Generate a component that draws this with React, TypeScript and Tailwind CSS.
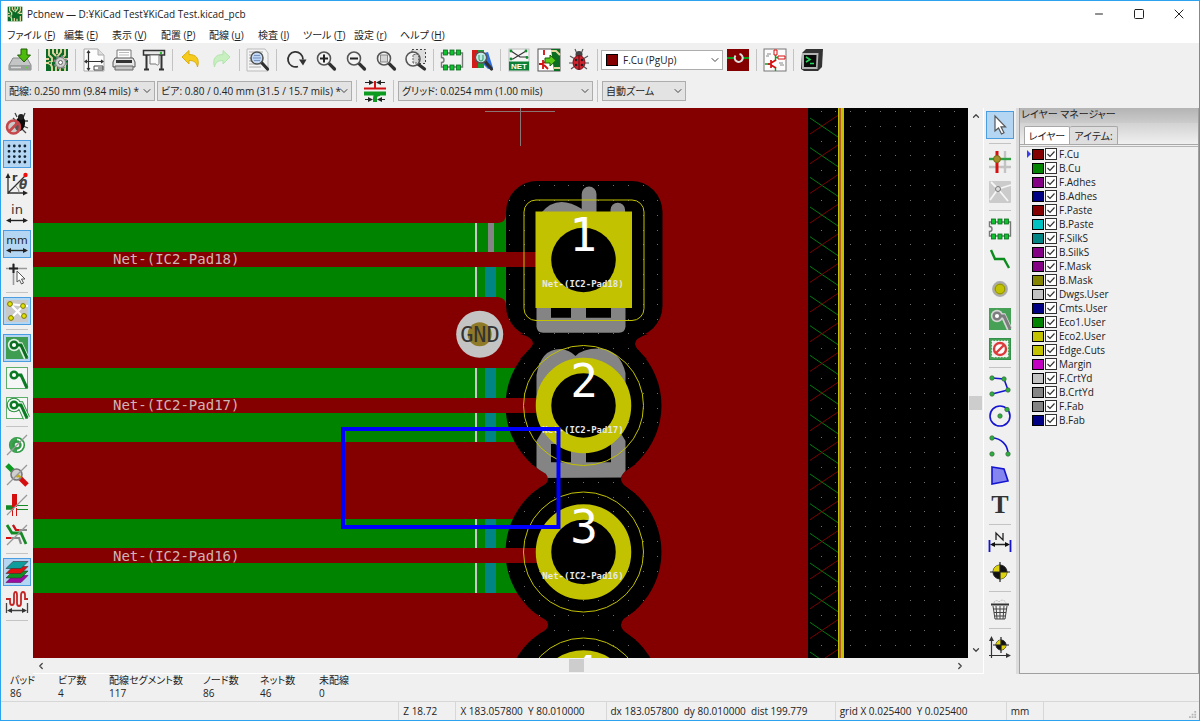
import type { ReactNode } from 'react';
import { ChevronDown, ChevronLeft, ChevronRight, ChevronUp, Minus, Square, X } from 'lucide-react';
import clsx from 'clsx';

type Tool = { label: string; icon: ReactNode; active?: boolean } | 'sep';

const GREEN = '#148a25';
const RED = '#d40f0f';

const menus = [
  { text: 'ファイル', key: 'F' },
  { text: '編集', key: 'E' },
  { text: '表示', key: 'V' },
  { text: '配置', key: 'P' },
  { text: '配線', key: 'u' },
  { text: '検査', key: 'I' },
  { text: 'ツール', key: 'T' },
  { text: '設定', key: 'r' },
  { text: 'ヘルプ', key: 'H' },
];

const layers = [
  { name: 'F.Cu', color: '#840000' },
  { name: 'B.Cu', color: '#008400' },
  { name: 'F.Adhes', color: '#840084' },
  { name: 'B.Adhes', color: '#000084' },
  { name: 'F.Paste', color: '#840000' },
  { name: 'B.Paste', color: '#00c2c2' },
  { name: 'F.SilkS', color: '#008484' },
  { name: 'B.SilkS', color: '#840084' },
  { name: 'F.Mask', color: '#840084' },
  { name: 'B.Mask', color: '#848400' },
  { name: 'Dwgs.User', color: '#c2c2c2' },
  { name: 'Cmts.User', color: '#000084' },
  { name: 'Eco1.User', color: '#008400' },
  { name: 'Eco2.User', color: '#c2c200' },
  { name: 'Edge.Cuts', color: '#c2c200' },
  { name: 'Margin', color: '#c200c2' },
  { name: 'F.CrtYd', color: '#c2c2c2' },
  { name: 'B.CrtYd', color: '#848484' },
  { name: 'F.Fab', color: '#848484' },
  { name: 'B.Fab', color: '#000084' },
];

const stats = [
  { label: 'パッド', value: '86' },
  { label: 'ビア数', value: '4' },
  { label: '配線セグメント数', value: '117' },
  { label: 'ノード数', value: '86' },
  { label: 'ネット数', value: '46' },
  { label: '未配線', value: '0' },
];

const statusCells = [
  '',
  'Z 18.72',
  'X 183.057800  Y 80.010000',
  'dx 183.057800  dy 80.010000  dist 199.779',
  'grid X 0.025400  Y 0.025400',
  'mm',
];

function Icon({ children }: { children: ReactNode }) {
  return (
    <svg viewBox="0 0 24 24" className="size-6 shrink-0 overflow-visible" fill="none" aria-hidden="true">
      {children}
    </svg>
  );
}

function BoardArt() {
  return (
    <>
      <rect x="1" y="1" width="22" height="22" fill="#0b6b26" />
      <path
        d="M4 1v6l3 3v4M8 1v4l3 3M12 1v5M16 1v3l-4 5M20 1v6l-4 4M23 11h-5M1 11h3M1 15h4l2 4v4M11 23v-5M15 23v-4M20 15v8"
        stroke="#e3d7a0"
        strokeWidth="1.9"
      />
      <circle cx="5" cy="15" r="2" fill="#e3d7a0" />
      <circle cx="5" cy="15" r="1" fill="#0b6b26" />
    </>
  );
}

function Lens({ children, x = 10, y = 10, r = 6.5 }: { children?: ReactNode; x?: number; y?: number; r?: number }) {
  return (
    <>
      <path d={`M${x + r * 0.75} ${y + r * 0.75}L21.500 21`} stroke="#303030" strokeWidth="3.200" strokeLinecap="round" />
      <circle cx={x} cy={y} r={r} fill="#f4f4f4" stroke="#555" strokeWidth="1.6" />
      {children}
    </>
  );
}

function Chip() {
  return (
    <>
      <path d="M1.500 5h21v14h-21v-4.500a2.500 2.500 0 0 0 0-5z" fill="#f3f3f3" stroke="#777" strokeWidth="1.4" />
      {[3.5, 10, 16.5].map((x) => (
        <g key={x} fill="#0fc02f" stroke="#0a6d1c" strokeWidth="0.8">
          <rect x={x} y="2" width="4" height="5" />
          <rect x={x} y="17" width="4" height="5" />
        </g>
      ))}
    </>
  );
}

function TrackArt({ color, halo }: { color: string; halo?: string }) {
  return (
    <>
      {halo && (
        <>
          <path d="M9 9h6.500l6 13" stroke={halo} strokeWidth="5.500" />
          <circle cx="9" cy="9" r="6.200" fill={halo} />
        </>
      )}
      <path d="M12 9h4l6 13" stroke={color} strokeWidth="3" />
      <circle cx="9" cy="9" r="3.300" fill="#fff" stroke={color} strokeWidth="2.500" />
    </>
  );
}

function Origin({ x, y, r }: { x: number; y: number; r: number }) {
  return (
    <>
      <circle cx={x} cy={y} r={r} fill="#111" stroke="#222" />
      <path
        d={`M${x} ${y}V${y - r}A${r} ${r} 0 0 0 ${x - r} ${y}ZM${x} ${y}V${y + r}A${r} ${r} 0 0 0 ${x + r} ${y}Z`}
        fill="#ded20c"
      />
      <path d={`M${x} ${y - r - 3}V${y + r + 3}M${x - r - 3} ${y}H${x + r + 3}`} stroke="#222" strokeWidth="1.200" />
    </>
  );
}

function Dots({ points }: { points: number[][] }) {
  return (
    <>
      {points.map(([x, y]) => (
        <circle key={`${x}-${y}`} cx={x} cy={y} r="2.200" fill="#29b13b" stroke="#3f6d46" strokeWidth="0.800" />
      ))}
    </>
  );
}

const mainTools: Tool[] = [
  {
    label: '保存',
    icon: (
      <>
        <path d="M5 10h14l4 7v5H1v-5z" fill="#c3c6c4" stroke="#868a88" />
        <path d="M1 17h22v5H1z" fill="#9a9e9c" />
        <path d="M3 19.500h10" stroke="#d8dad9" strokeWidth="1.500" />
        <circle cx="19" cy="19.500" r="1" fill="#53e02c" />
        <path d="M13 1h6v6h3.500L16 14 9.500 7H13z" fill="#4dbb0c" stroke="#1f5f05" />
      </>
    ),
  },
  'sep',
  {
    label: '基板の設定',
    icon: (
      <>
        <BoardArt />
        <circle cx="15.500" cy="14.500" r="5.500" fill="#d4d4d4" stroke="#888" strokeWidth="3" strokeDasharray="2.200 2.100" />
        <circle cx="15.500" cy="14.500" r="5" fill="#cfcfcf" stroke="#888" />
        <circle cx="15.500" cy="14.500" r="2" fill="#fff" stroke="#666" />
      </>
    ),
  },
  'sep',
  {
    label: 'ページ設定',
    icon: (
      <>
        <path d="M2 1h14l6 6v16H2z" fill="#fdfdfd" stroke="#aaa" />
        <path d="M16 1v6h6" stroke="#aaa" fill="#ddd" />
        <path
          d="M6.500 3v19M3 13.500h18M5 5l1.500-2L8 5M5 20l1.500 2L8 20M5 12l-2 1.500L5 15M19 12l2 1.500L19 15"
          stroke="#333"
          strokeWidth="1.200"
        />
        <path d="M12 18h9v4h-9zM16 20h5" stroke="#444" />
      </>
    ),
  },
  {
    label: '印刷',
    icon: (
      <>
        <path d="M5 2h14v9H5z" fill="#fff" stroke="#777" />
        <path d="M7 4.500h10M7 7h10" stroke="#bbb" />
        <path d="M3 10h18l2 4v5H1v-5z" fill="#e6e6e6" stroke="#555" />
        <path d="M4 12h16v3H4z" fill="#333" />
        <path d="M3 18h18v4H3z" fill="#c5c5c5" stroke="#666" />
      </>
    ),
  },
  {
    label: 'プロット',
    icon: (
      <>
        <path d="M1.500 2.500h21v4.500h-21z" fill="#e7e7e7" stroke="#333" strokeWidth="1.500" />
        <path d="M4.500 7v14M19.500 7v14M2 21.500h5M17 21.500h5" stroke="#333" strokeWidth="2" />
        <path d="M8 7h9v8c0 2-2 3-3 1H8z" fill="#fafafa" stroke="#777" />
        <circle cx="19" cy="5" r="1.200" fill="#27b82c" />
      </>
    ),
  },
  'sep',
  {
    label: '元に戻す',
    icon: <path d="M3 9l7-6.500V6.500c7 0 11 4 8.500 12.500-1-4.500-3-6.500-8.500-6.500V16z" fill="#f6cb1c" stroke="#d9ad10" />,
  },
  {
    label: 'やり直し',
    icon: <path d="M21 9l-7-6.500V6.500C7 6.500 3 10.500 5.500 19c1-4.500 3-6.500 8.500-6.500V16z" fill="#c8efc0" stroke="#b2e4ac" />,
  },
  'sep',
  {
    label: '検索',
    icon: (
      <>
        <path d="M1 1h18l3 4v18H1z" fill="#f4f4f4" stroke="#bbb" />
        <path d="M3 4h14M3 7h14M3 10h14M3 13h14M3 16h12M3 19h12" stroke="#999" strokeWidth="0.800" />
        <Lens x={11} y={10} r={6}>
          <circle cx="11" cy="10" r="5" fill="#bcd5f5" />
          <path d="M7 10h8M8 7.500h6M8 12.500h6" stroke="#7893bd" />
        </Lens>
      </>
    ),
  },
  'sep',
  {
    label: '再描画',
    icon: (
      <>
        <path d="M15 18.500a7.500 7.500 0 1 1 5-7" stroke="#333" strokeWidth="1.800" />
        <path d="M16 11.500h7.500l-3.500 6z" fill="#333" />
      </>
    ),
  },
  {
    label: '拡大',
    icon: (
      <Lens x={11} y={10.5}>
        <path d="M7 10.500h8M11 6.500v8" stroke="#222" strokeWidth="2" />
      </Lens>
    ),
  },
  {
    label: '縮小',
    icon: (
      <Lens x={11} y={10.5}>
        <path d="M7 10.500h8" stroke="#222" strokeWidth="2" />
      </Lens>
    ),
  },
  {
    label: '画面にフィット',
    icon: (
      <Lens x={11} y={10.5}>
        <rect x="7.500" y="7" width="7" height="7" fill="#d5d5d5" stroke="#888" />
      </Lens>
    ),
  },
  {
    label: '選択範囲を拡大',
    icon: (
      <>
        <rect x="9" y="1.500" width="13.500" height="14" fill="#ddd" stroke="#444" strokeDasharray="2 2" />
        <Lens x={10} y={11} r={7}>
          <path d="M10 15V6.500h5.500V15z" fill="#d5d5d5" stroke="#666" strokeDasharray="2 1" />
        </Lens>
      </>
    ),
  },
  'sep',
  { label: 'フットプリントエディター', icon: <Chip /> },
  {
    label: 'フットプリントビューアー',
    icon: (
      <>
        <path d="M2 2h6v18H2z" fill="#d21c1c" />
        <path d="M8 2h6v18H8z" fill="#1c9c38" />
        <path d="M14 5l4-1 5 16-5 1-4-4z" fill="#2f70de" />
        <Lens x={11} y={9.5} r={5.5}>
          <circle cx="11" cy="9.500" r="4.600" fill="#c0e8e8" />
          <path d="M9 7v4a2 2 0 0 0 4 0V7" stroke="#269a5a" />
        </Lens>
      </>
    ),
  },
  'sep',
  {
    label: 'ネットリスト',
    icon: (
      <>
        <rect x="2" y="1" width="20" height="22" fill="#f5f5f5" stroke="#bbb" />
        <path d="M4 3l9 6h7M4 11h2l13-8" stroke="#333" strokeWidth="1.200" />
        <g fill="#0a8f2c">
          <circle cx="4" cy="3" r="1.400" />
          <circle cx="19" cy="3" r="1.400" />
          <circle cx="4" cy="11" r="1.400" />
          <circle cx="20" cy="9.500" r="1.400" />
        </g>
        <rect x="2" y="13.500" width="20" height="9" fill="#0b8036" />
        <text x="12" y="21" textAnchor="middle" fill="#fff" fontSize="8" fontWeight="700" fontFamily="Liberation Sans, sans-serif">
          NET
        </text>
      </>
    ),
  },
  {
    label: '回路図から基板を更新',
    icon: (
      <>
        <rect x="1" y="1" width="22" height="22" fill="#fff" stroke="#555" />
        <path d="M14 1h9v22h-6z" fill="#0a6e22" />
        <path d="M14 3h5l4 4M17 20h6" stroke="#e2d69b" strokeWidth="2" />
        <path d="M7 2v5M2 16h4M6 12v9M7 15l4-3M7 17l4 4" stroke={RED} strokeWidth="1.800" />
        <path d="M8 10h5V7l6 5.500-6 5.500v-3H8z" fill="#58c91a" stroke="#1d5f07" />
      </>
    ),
  },
  {
    label: 'DRC',
    icon: (
      <>
        <path d="M8 1l2 5M16 1l-2 5M3 8l5 3M21 8l-5 3M2 15h5M22 15h-5M4 21l4-3M20 21l-4-3" stroke="#555" strokeWidth="1.100" />
        <circle cx="12" cy="6.500" r="3.500" fill="#444" />
        <ellipse cx="12" cy="14.500" rx="6" ry="7" fill="#d2232e" stroke="#75111b" />
        <path d="M12 7.500v14" stroke="#4a0a10" />
        <g fill="#222">
          <circle cx="9" cy="12" r="1.300" />
          <circle cx="15" cy="12" r="1.300" />
          <circle cx="9" cy="17" r="1.300" />
          <circle cx="15" cy="17" r="1.300" />
        </g>
      </>
    ),
  },
  'sep',
];

const layerPairTools: Tool[] = [
  {
    label: 'レイヤーペアを選択',
    icon: (
      <>
        <rect x="1" y="1" width="22" height="22" fill="#840000" />
        <path d="M1 10h7M16 10h7" stroke="#0a9a1c" strokeWidth="2" />
        <path d="M9.500 7.500a4 4 0 1 0 4-1.500" stroke="#ddd" strokeWidth="2" />
      </>
    ),
  },
  'sep',
  {
    label: '回路図エディター',
    icon: (
      <>
        <rect x="1" y="1" width="22" height="22" fill="#fcfcfc" stroke="#777" />
        <path d="M11 2h3v5h-3zM15 8h7v3h-7z" fill="#fff" stroke={RED} />
        <path d="M12.500 7v6M12.500 9.500H15M12.500 19v4M2 16h5" stroke="#119b28" strokeWidth="1.400" />
        <path d="M8 12v8M8 15l5-3M8 17l5 3M5 16h3" stroke={RED} strokeWidth="1.700" />
        <path d="M4 6h4M3 8h3M16 15h4M17 17h4" stroke="#888" />
      </>
    ),
  },
  'sep',
  {
    label: 'スクリプトコンソール',
    icon: (
      <>
        <path d="M6 1h17l-1 18-4 4H4l-3-2L2 5z" fill="#333" />
        <path d="M2 5h16.500l-1 16H2z" fill="#b4b4b4" />
        <path d="M4 7h12.500l-0.500 12H4z" fill="#0a0a0a" />
        <path d="M6 9l4 2.500-4 2.500M10 15.500h4" stroke="#22d65a" strokeWidth="1.600" />
      </>
    ),
  },
];

const optionTools: Tool[] = [
  {
    label: 'DRCを無効化',
    icon: (
      <>
        <path d="M10 1l2 4M20 1l-2 5M23 9h-4M23 16l-5-2M21 21l-4-4M8 6l3 3" stroke="#444" strokeWidth="1.300" />
        <ellipse cx="15" cy="12" rx="5" ry="7.500" fill="#0a0a0a" transform="rotate(15 15 12)" />
        <circle cx="16" cy="5" r="3" fill="#222" />
        <circle cx="8.500" cy="15" r="6.500" stroke="#c4474b" strokeWidth="2.600" fill="#a8a0a0" fillOpacity="0.500" />
        <path d="M4 19.500l9-9" stroke="#c4474b" strokeWidth="2.600" />
      </>
    ),
  },
  {
    label: 'グリッドを表示',
    active: true,
    icon: [4, 9.3, 14.6, 20].map((y) => (
      <path key={y} d={`M4 ${y}h17`} stroke="#123" strokeWidth="2.800" strokeLinecap="round" strokeDasharray="0 5.300" />
    )),
  },
  {
    label: '極座標',
    icon: (
      <>
        <path d="M3 22V4M3 21h18M3 21L20 4" stroke="#333" strokeWidth="1.300" />
        <path d="M0.500 6L3 1l2.500 5zM18 18.500l5 2.500-5 2.500z" fill="#222" />
        <path d="M10 14c3 2 4 4 4 7" stroke="#777" />
        <circle cx="20.500" cy="3" r="2.200" fill="#f20d0d" />
        <text x="7" y="9" fill="#333" fontSize="11" fontWeight="700" fontFamily="DejaVu Sans, sans-serif">
          r
        </text>
        <text x="14" y="17" fill="#444" fontSize="12" fontStyle="italic" fontWeight="700" fontFamily="DejaVu Sans, sans-serif">
          θ
        </text>
      </>
    ),
  },
  {
    label: 'インチ',
    icon: (
      <>
        <text x="12" y="12" textAnchor="middle" fill="#333" fontSize="13" fontFamily="DejaVu Sans, sans-serif">
          in
        </text>
        <path d="M3 18.500h18" stroke="#222" strokeWidth="1.400" />
        <path d="M6 16l-5 2.500L6 21zM18 16l5 2.500-5 2.500z" fill="#222" />
      </>
    ),
  },
  {
    label: 'ミリメートル',
    active: true,
    icon: (
      <>
        <text x="12" y="12" textAnchor="middle" fill="#222" fontSize="11" fontFamily="DejaVu Sans, sans-serif">
          mm
        </text>
        <path d="M3 18.500h18" stroke="#222" strokeWidth="1.400" />
        <path d="M6 16l-5 2.500L6 21zM18 16l5 2.500-5 2.500z" fill="#222" />
      </>
    ),
  },
  {
    label: 'カーソル形状',
    icon: (
      <>
        <path d="M8.500 1v22M1 6.500h21" stroke="#999" strokeWidth="1.600" />
        <path d="M8.500 2v9M4 6.500h9" stroke="#222" strokeWidth="2" />
        <path d="M12 9v11l2.500-2 2 4 2-1-2-4h3.500z" fill="#fff" stroke="#555" />
      </>
    ),
  },
  'sep',
  {
    label: 'ラッツネストを表示',
    active: true,
    icon: (
      <>
        <rect x="1" y="1" width="22" height="22" fill="#c9c9c9" />
        <path d="M5 5l13 13M7 18L18 7M5 5l18 2" stroke="#fff" strokeWidth="2.200" />
        {[[5, 5], [18, 7], [19, 17], [6, 19]].map(([x, y]) => (
          <circle key={x} cx={x} cy={y} r="2.400" fill="#e2e200" stroke="#77770a" />
        ))}
      </>
    ),
  },
  'sep',
  {
    label: 'ゾーンを塗りつぶし表示',
    active: true,
    icon: (
      <>
        <rect x="1" y="1" width="22" height="22" fill="#3f9d52" />
        <TrackArt color="#0b6e20" halo="#dff0e2" />
      </>
    ),
  },
  {
    label: 'ゾーンを非表示',
    icon: (
      <>
        <rect x="1.500" y="1.500" width="21" height="21" fill="#f6f6f6" stroke="#5cae69" />
        <TrackArt color="#0b7a22" />
      </>
    ),
  },
  {
    label: 'ゾーンの外枠を表示',
    icon: (
      <>
        <rect x="1.500" y="1.500" width="21" height="21" fill="#f6f6f6" stroke="#5cae69" />
        <path d="M9 9h6.500l6 13" stroke="#2c9140" strokeWidth="7.500" />
        <circle cx="9" cy="9" r="7.300" fill="#2c9140" />
        <TrackArt color="#0b7a22" halo="#f5fbf6" />
      </>
    ),
  },
  'sep',
  {
    label: 'ビアを輪郭表示',
    icon: (
      <>
        <circle cx="12" cy="12" r="7.300" stroke="#2f9a43" strokeWidth="1.600" fill="#fff" />
        <path d="M12 4.500a7.500 7.500 0 0 0 0 15z" fill="#3fa252" />
        <circle cx="12" cy="12" r="3.500" stroke="#2f9a43" strokeWidth="2.400" fill="#eee" />
        <path d="M2 22L22 2" stroke="#999" strokeWidth="1.200" />
      </>
    ),
  },
  {
    label: 'パッドを輪郭表示',
    icon: (
      <>
        <path d="M2 2l8 8" stroke="#0c9a20" strokeWidth="5" />
        <path d="M13 13l9 9" stroke={RED} strokeWidth="5" />
        <circle cx="11.500" cy="11.500" r="5.500" fill="#cfcfcf" stroke="#777" strokeWidth="1.600" />
        <path d="M11.500 14l2-1.500 2 2" fill="#d4c912" stroke="#c9a70e" strokeWidth="2" />
        <path d="M2 22L22 2" stroke="#999" strokeWidth="1.200" />
      </>
    ),
  },
  {
    label: '配線を輪郭表示',
    icon: (
      <>
        <path d="M1 14.500h8" stroke={GREEN} strokeWidth="4.500" />
        <path d="M12 12.500h11M12 16.500h11" stroke={GREEN} />
        <path d="M9.500 1v13" stroke={RED} strokeWidth="5" />
        <path d="M7.500 15v8M11.500 15v8" stroke={RED} />
        <path d="M2 22L22 2" stroke="#999" strokeWidth="1.200" />
      </>
    ),
  },
  {
    label: 'ハイコントラスト',
    icon: (
      <>
        <path d="M8 2l3 5h11M1 15h13l2 6" stroke="#888" strokeWidth="2.200" />
        <path d="M8 2l3 5h3M1 15h5" stroke={RED} strokeWidth="2.200" />
        <path d="M2 2l5 8h9l5 11" stroke={GREEN} strokeWidth="2.800" />
        <path d="M2 22L22 2" stroke="#999" strokeWidth="1.200" />
      </>
    ),
  },
  'sep',
  {
    label: 'レイヤーマネージャーを表示',
    active: true,
    icon: (
      <>
        <path d="M8 15.500h15l-7 7H1z" fill="#9e0c9e" stroke="#5c085c" strokeWidth="0.600" />
        <path d="M8 11h15l-7 7H1z" fill="#0f9122" stroke="#333" strokeWidth="0.600" />
        <path d="M8 6.500h15l-7 7H1z" fill="#e01010" stroke="#333" strokeWidth="0.600" />
        <path d="M8 1.500h15l-7 7H1z" fill="#0f9c9c" stroke="#333" strokeWidth="0.600" />
      </>
    ),
  },
  {
    label: 'マイクロ波ツール',
    icon: (
      <>
        <path
          d="M1 9h4v3c0 4 4 4 4 0V5c0-4 3-4 3 0v8c0 4 4 4 4 0V5c0-4 4-4 4 0v4h3"
          stroke="#c42626"
          strokeWidth="1.800"
        />
        <path d="M1.500 13v10M22.500 13v10M4 20.500h16" stroke="#444" strokeWidth="1.300" />
        <path d="M7 18l-5 2.500L7 23zM17 18l5 2.500-5 2.500z" fill="#333" />
      </>
    ),
  },
  'sep',
];

const drawTools: Tool[] = [
  {
    label: '選択',
    active: true,
    icon: <path d="M7 3v15l3.500-3 3 6 2.500-1.200-3-6h4.500z" fill="#fff" stroke="#555" strokeWidth="1.200" />,
  },
  'sep',
  {
    label: 'ネットをハイライト',
    icon: (
      <>
        <path d="M17 1v22M1 17h22" stroke="#c3c3c3" strokeWidth="2.400" />
        <path d="M1 9h22" stroke="#30a142" strokeWidth="2.400" />
        <path d="M9 1v22" stroke={RED} strokeWidth="3" />
        <circle cx="9" cy="9" r="3.500" fill="#a3902b" stroke="#7a6b16" />
      </>
    ),
  },
  {
    label: 'ローカルラッツネスト',
    icon: (
      <>
        <rect x="1" y="1" width="22" height="22" rx="1" fill="#cbcbcb" />
        <path d="M10 9L2 20M10 9l10 12M10 9l13-4M10 9L3 2" stroke="#f6f6f6" strokeWidth="1.800" />
        <circle cx="10" cy="9" r="2.500" fill="#ddd" stroke="#777" />
      </>
    ),
  },
  'sep',
  { label: 'フットプリントを追加', icon: <Chip /> },
  { label: '配線', icon: <path d="M3 3l4 9h9l5 9" stroke="#0b8c1d" strokeWidth="2.400" /> },
  {
    label: 'ビアを追加',
    icon: (
      <>
        <circle cx="12" cy="12" r="6.700" fill="#c2c200" stroke="#aaa" strokeWidth="2.400" />
        <circle cx="12" cy="12" r="4.800" stroke="#8c8c0c" />
      </>
    ),
  },
  {
    label: '塗りつぶしゾーンを追加',
    icon: (
      <>
        <rect x="1" y="1" width="22" height="22" fill="#46a056" />
        <TrackArt color="#7d7d7d" halo="#d5d5d5" />
      </>
    ),
  },
  {
    label: 'キープアウトエリアを追加',
    icon: (
      <>
        <rect x="1.500" y="1.500" width="21" height="21" fill="#46a056" stroke="#33914a" />
        <rect x="4" y="4" width="16" height="16" fill="#eee" stroke="#fff" strokeDasharray="1.500 1.500" />
        <circle cx="12" cy="12" r="6" stroke="#dd3b3b" strokeWidth="2.400" fill="#fff" />
        <path d="M8 16l8-8" stroke="#dd3b3b" strokeWidth="2.400" />
      </>
    ),
  },
  'sep',
  {
    label: '図形ラインを追加',
    icon: (
      <>
        <path d="M4 4l12 1 4 11-16 4" stroke="#1313d0" strokeWidth="1.600" />
        <Dots points={[[4, 4], [16, 5], [20, 16], [4, 20]]} />
      </>
    ),
  },
  {
    label: '円を追加',
    icon: (
      <>
        <circle cx="12" cy="12" r="10" stroke="#1313d0" strokeWidth="1.600" />
        <Dots points={[[12, 12], [19, 5.5]]} />
      </>
    ),
  },
  {
    label: '円弧を追加',
    icon: (
      <>
        <path d="M4 4c9 0 16 7 16 16" stroke="#1313d0" strokeWidth="1.600" />
        <Dots points={[[4, 4], [4, 20], [20, 20]]} />
      </>
    ),
  },
  {
    label: 'ポリゴンを追加',
    icon: <path d="M4 3l12 2 4 12-16 3z" fill="#8585f0" stroke="#1313d0" strokeWidth="1.600" />,
  },
  {
    label: 'テキストを追加',
    icon: (
      <text x="12" y="19" textAnchor="middle" fill="#333" fontSize="26" fontWeight="700" fontFamily="Liberation Serif, serif">
        T
      </text>
    ),
  },
  'sep',
  {
    label: '寸法を追加',
    icon: (
      <>
        <path d="M1.500 9v12M22.500 9v12" stroke="#1313d0" strokeWidth="1.800" />
        <path d="M4 13.500h16M8 9V2l7 7V2" stroke="#222" strokeWidth="1.300" />
        <path d="M7 11l-5 2.500L7 16zM17 11l5 2.500-5 2.500z" fill="#111" />
      </>
    ),
  },
  { label: '位置合わせターゲットを追加', icon: <Origin x={12} y={11} r={7} /> },
  'sep',
  {
    label: '削除',
    icon: (
      <>
        <path d="M6 5c0-3 4-3 5-1 2-3 6-2 7 1" stroke="#bbb" strokeDasharray="2 1" />
        <path d="M3 6.500h18" stroke="#333" strokeWidth="2" />
        <path d="M5 8l2 13h10l2-13M8 8l1 13M12 8v13M16 8l-1 13M5 11h14M6 14.500h12M6.500 18h11" stroke="#444" />
      </>
    ),
  },
  'sep',
  {
    label: '原点を設定',
    icon: (
      <>
        <path d="M3.500 23V4M1 20.500h20" stroke="#333" strokeWidth="1.200" />
        <path d="M1 6l2.500-5L6 6zM18 18l5 2.500-5 2.500z" fill="#333" />
        <Origin x={13} y={10} r={5} />
      </>
    ),
  },
];

function ToolList({ tools, vertical }: { tools: Tool[]; vertical?: boolean }) {
  return tools.map((tool, index) =>
    tool === 'sep' ? (
      <div key={index} className={clsx('grid shrink-0 place-items-center', vertical ? 'h-[7px] w-7' : 'h-7 w-[7px]')}>
        <div className={clsx('bg-[#c3c3c3]', vertical ? 'h-px w-[22px]' : 'h-[22px] w-px')} />
      </div>
    ) : (
      <button
        key={index}
        type="button"
        aria-label={tool.label}
        className={clsx(
          'grid size-7 shrink-0 place-items-center border',
          vertical ? 'my-px' : 'mx-px',
          tool.active ? 'border-[#4a9de0] bg-[#b5d6f2]' : 'border-transparent',
        )}
      >
        <Icon>{tool.icon}</Icon>
      </button>
    ),
  );
}

function Combo({ label, value, className, swatch }: { label: string; value: string; className: string; swatch?: boolean }) {
  return (
    <div className={clsx('relative shrink-0', className)}>
      <select
        aria-label={label}
        className={clsx(
          'h-5 w-full appearance-none border border-[#adadad] text-[#222]',
          swatch ? 'bg-white pl-[21px]' : 'bg-[#e3e3e3] pl-[3px]',
        )}
      >
        <option>{value}</option>
      </select>
      {swatch && <span className="pointer-events-none absolute top-1 left-[5px] size-3 border border-black bg-[#840000]" />}
      <ChevronDown className="pointer-events-none absolute top-1 right-[2px] size-3 text-[#444]" strokeWidth={2} />
    </div>
  );
}

function TitleBar() {
  return (
    <header className="flex h-[26px] items-center bg-white pl-[6px]">
      <svg viewBox="0 0 24 24" className="size-4" fill="none" aria-hidden="true">
        <BoardArt />
      </svg>
      <h1 className="ml-1 grow text-[#222]">Pcbnew — D:¥KiCad Test¥KiCad Test.kicad_pcb</h1>
      <button type="button" aria-label="最小化" className="grid h-full w-10 place-items-center">
        <Minus className="size-3" strokeWidth={2} />
      </button>
      <button type="button" aria-label="最大化" className="grid h-full w-10 place-items-center">
        <Square className="size-3" strokeWidth={2} />
      </button>
      <button type="button" aria-label="閉じる" className="grid h-full w-10 place-items-center">
        <X className="size-4" strokeWidth={1.5} />
      </button>
    </header>
  );
}

function MenuBar() {
  return (
    <nav className="grid h-4 grid-cols-[57px_48px_49px_48px_49px_45px_51px_46px_auto] items-center justify-start bg-white pl-[6px]">
      {menus.map((menu) => (
        <button key={menu.key} type="button" className="text-left whitespace-nowrap text-[#222]">
          {menu.text} (<u>{menu.key}</u>)
        </button>
      ))}
    </nav>
  );
}

function Toolbars() {
  return (
    <div className="bg-[#f0f0f0]">
      <div className="flex h-[34px] items-center pl-1">
        <ToolList tools={mainTools} />
        <Combo label="レイヤー" value="F.Cu (PgUp)" className="w-[122px]" swatch />
        <ToolList tools={layerPairTools} />
      </div>
      <div className="flex h-[30px] items-center pb-[2px] pl-1">
        <Combo label="配線幅" value="配線: 0.250 mm (9.84 mils) *" className="w-[150px]" />
        <Combo label="ビアサイズ" value="ビア: 0.80 / 0.40 mm (31.5 / 15.7 mils) *" className="ml-[2px] w-[195px]" />
        <div className="mx-1 h-[22px] w-px bg-[#c3c3c3]" />
        <button type="button" aria-label="配線幅を自動選択" className="grid size-7 place-items-center">
          <Icon>
            <path d="M1 9.500h22" stroke={RED} strokeWidth="2" />
            <path d="M1 14.500h22" stroke="#0c9a20" strokeWidth="4" />
            <path d="M12 9V2" stroke={RED} strokeWidth="2" />
            <path d="M12 23v-4c0-3 2-4 5-4" stroke="#0c9a20" strokeWidth="4" />
            <path d="M2 3.500h6M22 3.500h-6M2 20.500h5M22 20.500h-6" stroke="#222" />
            <path d="M6 1l5 2.500L6 6zM18 1l-5 2.500L18 6zM5 18l5 2.500L5 23zM19 18l-5 2.500 5 2.500z" fill="#222" />
          </Icon>
        </button>
        <div className="mx-1 h-[22px] w-px bg-[#c3c3c3]" />
        <Combo label="グリッド" value="グリッド: 0.0254 mm (1.00 mils)" className="w-[195px]" />
        <div className="mx-1 h-[22px] w-px bg-[#c3c3c3]" />
        <Combo label="ズーム" value="自動ズーム" className="w-[84px]" />
      </div>
    </div>
  );
}

const PITCH = 14.83;

function gridPath() {
  let d = '';
  for (let col = -3; col < 30; col++) {
    for (let row = 0; row < 38; row++) {
      d += `M${Math.round(524 + col * PITCH)} ${Math.round(111 + row * PITCH)}h1v1h-1z`;
    }
  }
  return d;
}

const padRows = [
  { label: '2', net: 'Net-(IC2-Pad17)', y: 405.5 },
  { label: '3', net: 'Net-(IC2-Pad16)', y: 552 },
  { label: '4', net: '', y: 698 },
];

const tracks = [
  { y: 223, red: 252, text: 264, net: 'Net-(IC2-Pad18)' },
  { y: 368, red: 398, text: 410, net: 'Net-(IC2-Pad17)' },
  { y: 519, red: 548, text: 561, net: 'Net-(IC2-Pad16)' },
];

function Clearance() {
  return (
    <>
      <rect x="506" y="181" width="156.500" height="156" rx="31" />
      {padRows.map((pad) => (
        <circle key={pad.label} cx="583.500" cy={pad.y} r="78" />
      ))}
      <path d="M520 334Q533 337 533 344Q530 350 520 359H647Q636 350 635 344Q635 338 648 334Z" />
      <path d="M531 464Q548 472 548 479Q548 485 531 494H636Q621 485 621 479Q621 472 636 464Z" />
      <path d="M531 610Q548 618 548 625Q548 631 531 640H636Q621 631 621 625Q621 618 636 610Z" />
    </>
  );
}

function BoardCanvas() {
  const grid = gridPath();
  const mono = 'DejaVu Sans Mono, monospace';
  return (
    <svg viewBox="33 108 935 550" preserveAspectRatio="xMinYMin slice" className="size-full bg-black" role="img" aria-label="基板">
      <defs>
        <clipPath id="clearance">
          <Clearance />
        </clipPath>
      </defs>

      <path d={grid} fill="#707070" />
      <path d="M33 108H808V658H33Z" fill="#840000" />
      {tracks.map((track) => (
        <g key={track.y}>
          <rect x="33" y={track.y} width="510" height="74" fill="#008400" />
          <rect x="475" y={track.y} width="2" height="74" fill="#c8c8c8" />
          <rect x="485" y={track.y} width="11" height="74" fill="#008484" />
        </g>
      ))}
      <path d="M485 223h11v30h-11z" fill="#008400" />
      <path d="M488 223h6v30h-6z" fill="#848484" />
      <path d="M498 223Q506 222 506 215V225H498ZM498 297Q506 298 506 305V295H498Z" fill="#008400" />

      <Clearance />
      <g clipPath="url(#clearance)">
        <path d={grid} fill="#707070" />
        <g fill="#848484">
          <path d="M581.700 212V194a7.400 7.400 0 0 1 14.800 0V212ZM610.500 212V210a7.300 7.300 0 0 1 14.600 0V212Z" />
          <path d="M541 213Q557 193 582 209V213Z" />
          <path d="M536.500 307H625.500V326.500Q625 332.700 619 332.700H543Q537 332.700 536.500 326.500Z" />
          <path d="M536.500 405V375Q541 349 560 349Q570 350 575.500 356Q583 348 600 348.500Q620 350 625.500 373V405Z" />
          <path d="M536.500 478V441L543 430H619L625.500 441V477.500Z" />
        </g>
        <path d="M551 307h20v10.700h-20zM586 307h25v10.700h-25zM551 444h20v18.300h-20zM586 444h25v18.300h-25z" />
      </g>

      {tracks.map((track) => (
        <g key={track.y}>
          <rect x="33" y={track.red} width="507" height="15" fill="#840000" />
          <text x="113" y={track.text} fill="#d0b4b4" fontSize="14" fontFamily={mono}>
            {track.net}
          </text>
        </g>
      ))}

      <rect x="535.500" y="211.500" width="96.500" height="96.500" fill="#c2c200" />
      <circle cx="583.500" cy="260" r="32.300" />
      <rect x="524" y="200" width="120" height="120.500" rx="12" fill="none" stroke="#c2c200" />
      <text x="583" y="251" textAnchor="middle" fill="#fff" fontSize="46" fontFamily={mono}>
        1
      </text>
      <text x="583" y="287" textAnchor="middle" fill="#e8e8e8" fontSize="9" fontWeight="700" fontFamily={mono}>
        Net-(IC2-Pad18)
      </text>
      {padRows.map((pad) => (
        <g key={pad.label}>
          <circle cx="583.500" cy={pad.y} r="60" fill="none" stroke="#c2c200" />
          <circle cx="583.500" cy={pad.y} r="40" fill="#000" stroke="#c2c200" strokeWidth="15.500" />
          <text x="584" y={pad.y - 9} textAnchor="middle" fill="#fff" fontSize="46" fontFamily={mono}>
            {pad.label}
          </text>
          <text x="583" y={pad.y + 27} textAnchor="middle" fill="#e8e8e8" fontSize="9" fontWeight="700" fontFamily={mono}>
            {pad.net}
          </text>
        </g>
      ))}

      <circle cx="479.700" cy="334.300" r="23.500" fill="#c4c4c4" />
      <circle cx="479.700" cy="334.300" r="12" fill="#8f7a27" />
      <text x="480" y="342" textAnchor="middle" fill="#333" fontSize="22" fontFamily={mono}>
        GND
      </text>

      {Array.from({ length: 20 }, (_, i) => 108 + i * 29.67).map((y) => (
        <g key={y} strokeWidth="1">
          <path d={`M810 ${y + 10}l28 19`} stroke="#007a10" />
          <path d={`M810 ${y + 26}l30-20`} stroke="#7a0000" />
        </g>
      ))}
      <path d="M838 108h6v550h-6z" fill="#c2c200" />
      <path d="M839 108h2v550h-2z" fill="#b5602a" />

      <path d="M485 111.500h70M520.500 108v38" stroke="#8a7474" />
      <rect x="343" y="429" width="215.500" height="98" fill="none" stroke="#00f" strokeWidth="4" />
    </svg>
  );
}

function Workspace() {
  return (
    <div className="grid min-w-0 grow grid-cols-[1fr_15px] grid-rows-[1fr_15px] border-r border-b border-white">
      <div className="relative overflow-hidden">
        <div className="absolute inset-0">
          <BoardCanvas />
        </div>
      </div>
      <div className="flex flex-col items-center">
        <button type="button" aria-label="上へスクロール" className="grid h-4 place-items-center">
          <ChevronUp className="size-[10px] text-[#444]" strokeWidth={3} />
        </button>
        <div className="grow-[272]" />
        <div className="h-[14px] w-[13px] bg-[#cdcdcd]" />
        <div className="grow-[232]" />
        <button type="button" aria-label="下へスクロール" className="grid h-4 place-items-center">
          <ChevronDown className="size-[10px] text-[#444]" strokeWidth={3} />
        </button>
      </div>
      <div className="flex items-center">
        <button type="button" aria-label="左へスクロール" className="grid w-4 place-items-center">
          <ChevronLeft className="size-[10px] text-[#444]" strokeWidth={3} />
        </button>
        <div className="grow-[520]" />
        <div className="h-[13px] w-[15px] bg-[#cdcdcd]" />
        <div className="grow-[368]" />
        <button type="button" aria-label="右へスクロール" className="grid w-4 place-items-center">
          <ChevronRight className="size-[10px] text-[#444]" strokeWidth={3} />
        </button>
      </div>
    </div>
  );
}

function LayerManager() {
  return (
    <aside className="flex w-[180px] shrink-0 flex-col border-r border-b border-l border-[#a0a0a0]">
      <h2 className="h-[15px] bg-linear-to-b from-[#b4b4b4] to-[#cbcbcb] pl-px leading-3 text-[#222]">レイヤー マネージャー</h2>
      <div role="tablist" className="flex h-[22px] items-end border-b border-[#a8a8a8] bg-linear-to-b from-[#d2d2d2] to-[#f0f0f0] pl-1 leading-4">
        <button type="button" role="tab" aria-selected="true" className="h-[18px] w-[46px] rounded-t-xs border border-b-0 border-[#a8a8a8] bg-white">
          レイヤー
        </button>
        <button
          type="button"
          role="tab"
          aria-selected="false"
          className="h-[18px] w-12 rounded-t-xs border border-b-0 border-l-0 border-[#a8a8a8] bg-[#dedede]"
        >
          アイテム:
        </button>
      </div>
      <ul className="mt-px border-t border-[#b5b5b5]">
        {layers.map((layer, index) => (
          <li key={layer.name}>
            <label className="flex h-[14px] items-center gap-px pl-[7px] text-[#222]">
              <span className="w-1">
                {index === 0 && (
                  <svg viewBox="0 0 4 8" className="h-2 w-1" aria-hidden="true">
                    <path d="M0 0l4 4-4 4z" fill="#3d3df5" />
                  </svg>
                )}
              </span>
              <span className="h-[11px] w-3 border border-black" style={{ backgroundColor: layer.color }} />
              <span className="relative grid size-3">
                <input type="checkbox" defaultChecked className="peer size-3 appearance-none border border-[#333] bg-white" />
                <svg
                  viewBox="0 0 12 12"
                  className="pointer-events-none absolute inset-0 hidden peer-checked:block"
                  fill="none"
                  aria-hidden="true"
                >
                  <path d="M2.500 6l2.500 2.500 4.500-5" stroke="#333" strokeWidth="1.200" />
                </svg>
              </span>
              <span className="pl-px">{layer.name}</span>
            </label>
          </li>
        ))}
      </ul>
    </aside>
  );
}

export default function App() {
  return (
    <div className="flex h-screen flex-col overflow-hidden border border-[#2ba3ee] bg-[#f0f0f0] font-['Open_Sans','Noto_Sans_CJK_JP',sans-serif] text-[10px] leading-[13px] text-[#222] [font-feature-settings:'palt']">
      <TitleBar />
      <MenuBar />
      <Toolbars />
      <main className="flex min-h-0 grow pt-px">
        <div className="flex w-8 shrink-0 flex-col items-center pt-px">
          <ToolList tools={optionTools} vertical />
        </div>
        <Workspace />
        <div className="flex w-8 shrink-0 flex-col items-center pt-[2px]">
          <ToolList tools={drawTools} vertical />
        </div>
        <div className="w-[3px] shrink-0 bg-[#dcdcdc]" />
        <LayerManager />
      </main>
      <dl className="grid h-[27px] shrink-0 grid-cols-[48px_51px_94px_57px_59px_auto] justify-start pl-[9px]">
        {stats.map((stat) => (
          <div key={stat.label}>
            <dt className="whitespace-nowrap">{stat.label}</dt>
            <dd>{stat.value}</dd>
          </div>
        ))}
      </dl>
      <footer className="grid h-[19px] shrink-0 grid-cols-[398fr_57fr_150fr_229fr_171fr_37fr_155fr] items-center border-t border-[#d7d7d7]">
        {statusCells.map((cell, index) => (
          <div key={index} className="h-full border-r border-[#d7d7d7] pl-[4px] leading-[18px] whitespace-pre">
            {cell}
          </div>
        ))}
        <svg viewBox="0 0 9 9" className="mt-2 mr-[2px] size-2 justify-self-end" aria-hidden="true">
          <path d="M6 0h2v2H6zM6 3h2v2H6zM3 3h2v2H3zM6 6h2v2H6zM3 6h2v2H3zM0 6h2v2H0z" fill="#b5b5b5" />
        </svg>
      </footer>
    </div>
  );
}
